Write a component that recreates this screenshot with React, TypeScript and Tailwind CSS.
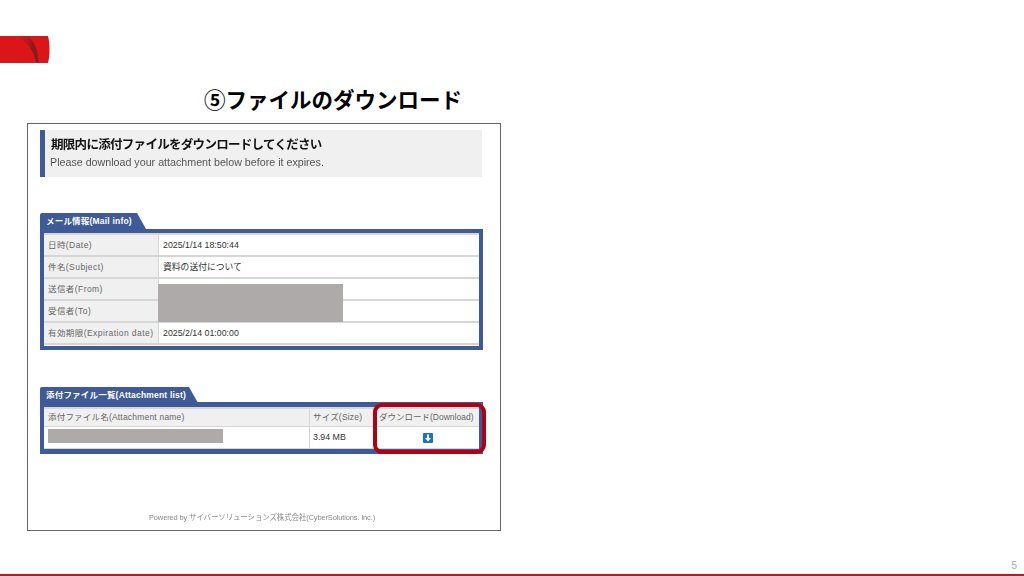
const cjk = "font-['Liberation_Sans','Noto_Sans_CJK_JP',sans-serif]";

function Logo() {
  return (
    <svg className="block" width="50" height="27" viewBox="0 0 50 27">
      <defs>
        <linearGradient id="sh" x1="0" y1="0.1" x2="1" y2="0.5">
          <stop offset="0" stopColor="#dc1518" stopOpacity="0" />
          <stop offset="0.75" stopColor="#8a1a1c" />
          <stop offset="1" stopColor="#8a1a1c" />
        </linearGradient>
      </defs>
      <path d="M0 0H48C50 8 50 19 48 27H0Z" fill="#dc1518" />
      <path d="M14 0H28C35 6 38.500 16 38.500 27H36C34 14 27 5 14 0Z" fill="url(#sh)" />
    </svg>
  );
}

function Tab({ label, width }: { label: string; width: string }) {
  return (
    <div className={`${width} h-4 whitespace-nowrap bg-[#3e5a98] rounded-tl-[2px] pl-1.5 text-[8.5px] font-bold tracking-[0.2px] leading-4 text-white [clip-path:polygon(0_0,calc(100%-9px)_0,100%_100%,0_100%)]`}>
      {label}
    </div>
  );
}

function InfoRow({ label, value, last }: { label: string; value: string; last?: boolean }) {
  return (
    <div className={`flex h-[22px] border-t-2 border-[#d6d6d6] ${last ? "border-b-2 h-[24px]" : ""}`}>
      <div className="flex w-[115px] shrink-0 items-center whitespace-nowrap border-r border-[#d6d6d6] bg-[#f0f0f0] pl-1 text-[8.5px] tracking-[0.43px] text-[#666666]">
        {label}
      </div>
      <div className="flex flex-1 items-center bg-white pt-px pl-[4px] text-[8.8px] text-[#333333]">{value}</div>
    </div>
  );
}

export default function App() {
  return (
    <div className={`relative flex h-[576px] w-[1024px] flex-col overflow-hidden bg-white ${cjk}`}>
      <div className="mt-[36px] h-[27px] w-[50px]">
        <Logo />
      </div>
      <h1 className="mt-[21px] ml-[204px] h-[39px] w-[270px] text-[21.5px] leading-[34px] font-bold whitespace-nowrap text-black">
        ⑤ファイルのダウンロード
      </h1>
      <main className="ml-[27px] flex h-[408px] w-[474px] flex-col border border-[#666666] pt-[6px] pl-3 blur-[0.3px]">
        <header className="flex h-[47px] w-[442px] flex-col border-l-[5px] border-[#3e5a98] bg-[#f0f0f0] pt-[6px] pl-1.5">
          <div className="text-[12.5px] leading-[19px] font-bold tracking-[-0.7px] whitespace-nowrap text-[#111111]">期限内に添付ファイルをダウンロードしてください</div>
          <div className="-ml-px pt-px text-[10.7px] leading-[12px] whitespace-nowrap text-[#555555]">Please download your attachment below before it expires.</div>
        </header>

        <section className="mt-9 w-[443px]">
          <Tab label="メール情報(Mail info)" width="w-[106px]" />
          <div className="relative h-[121px] border-4 border-[#3e5a98] bg-white">
            <InfoRow label="日時(Date)" value="2025/1/14 18:50:44" />
            <InfoRow label="件名(Subject)" value="資料の送付について" />
            <InfoRow label="送信者(From)" value="" />
            <InfoRow label="受信者(To)" value="" />
            <InfoRow label="有効期限(Expiration date)" value="2025/2/14 01:00:00" last />
            <div className="absolute top-[51px] left-[114px] h-[38px] w-[185px] bg-[#aeaaaa]" />
          </div>
        </section>

        <section className="relative mt-[37px] w-[443px]">
          <Tab label="添付ファイル一覧(Attachment list)" width="w-[158px]" />
          <div className="relative -mt-px h-[52px] border-4 border-t-[5px] border-b-[5px] border-[#3e5a98] bg-white">
            <div className="flex h-5 border-t-2 border-b border-[#d6d6d6] bg-[#f0f0f0] text-[8.5px] tracking-[0.2px] whitespace-nowrap text-[#666666]">
              <div className="flex w-[266px] shrink-0 items-center border-r border-[#d6d6d6] pl-1">添付ファイル名(Attachment name)</div>
              <div className="flex w-[66px] shrink-0 items-center pl-[3px]">サイズ(Size)</div>
              <div className="flex flex-1 items-center pl-[3px] tracking-[0px]">ダウンロード(Download)</div>
            </div>
            <div className="flex h-[22px] border-b border-[#d6d6d6] text-[8.8px] text-[#333333]">
              <div className="w-[266px] shrink-0 border-r border-[#d6d6d6]" />
              <div className="flex w-[66px] shrink-0 items-center pl-[3px]">3.94 MB</div>
              <div className="flex flex-1 items-center justify-center">
                <svg width="10" height="10" viewBox="0 0 10 10" className="block">
                  <rect width="10" height="10" rx="1" fill="#1a75bc" />
                  <path d="M4 1.500H6V5H8L5 8.500L2 5H4Z" fill="#ffffff" />
                </svg>
              </div>
            </div>
            <div className="absolute top-[22px] left-1 h-[14px] w-[175px] bg-[#aeaaaa]" />
          </div>
          <div className="absolute top-[16px] left-[333px] h-[51px] w-[113px] rounded-[9px] border-4 border-[#b00012]" />
        </section>

        <footer className="mt-[58px] w-[444px] text-center text-[7.5px] leading-3 tracking-[-0.15px] whitespace-nowrap text-[#8a8a8a]">
          Powered by サイバーソリューションズ株式会社(CyberSolutions. Inc.)
        </footer>
      </main>
      <div className="mt-[30px] mr-[7px] text-right text-[10px] leading-[10px] text-[#a8a8a8]">5</div>
      <div className="mt-auto h-[2px] bg-[#c8161d]" />
    </div>
  );
}
